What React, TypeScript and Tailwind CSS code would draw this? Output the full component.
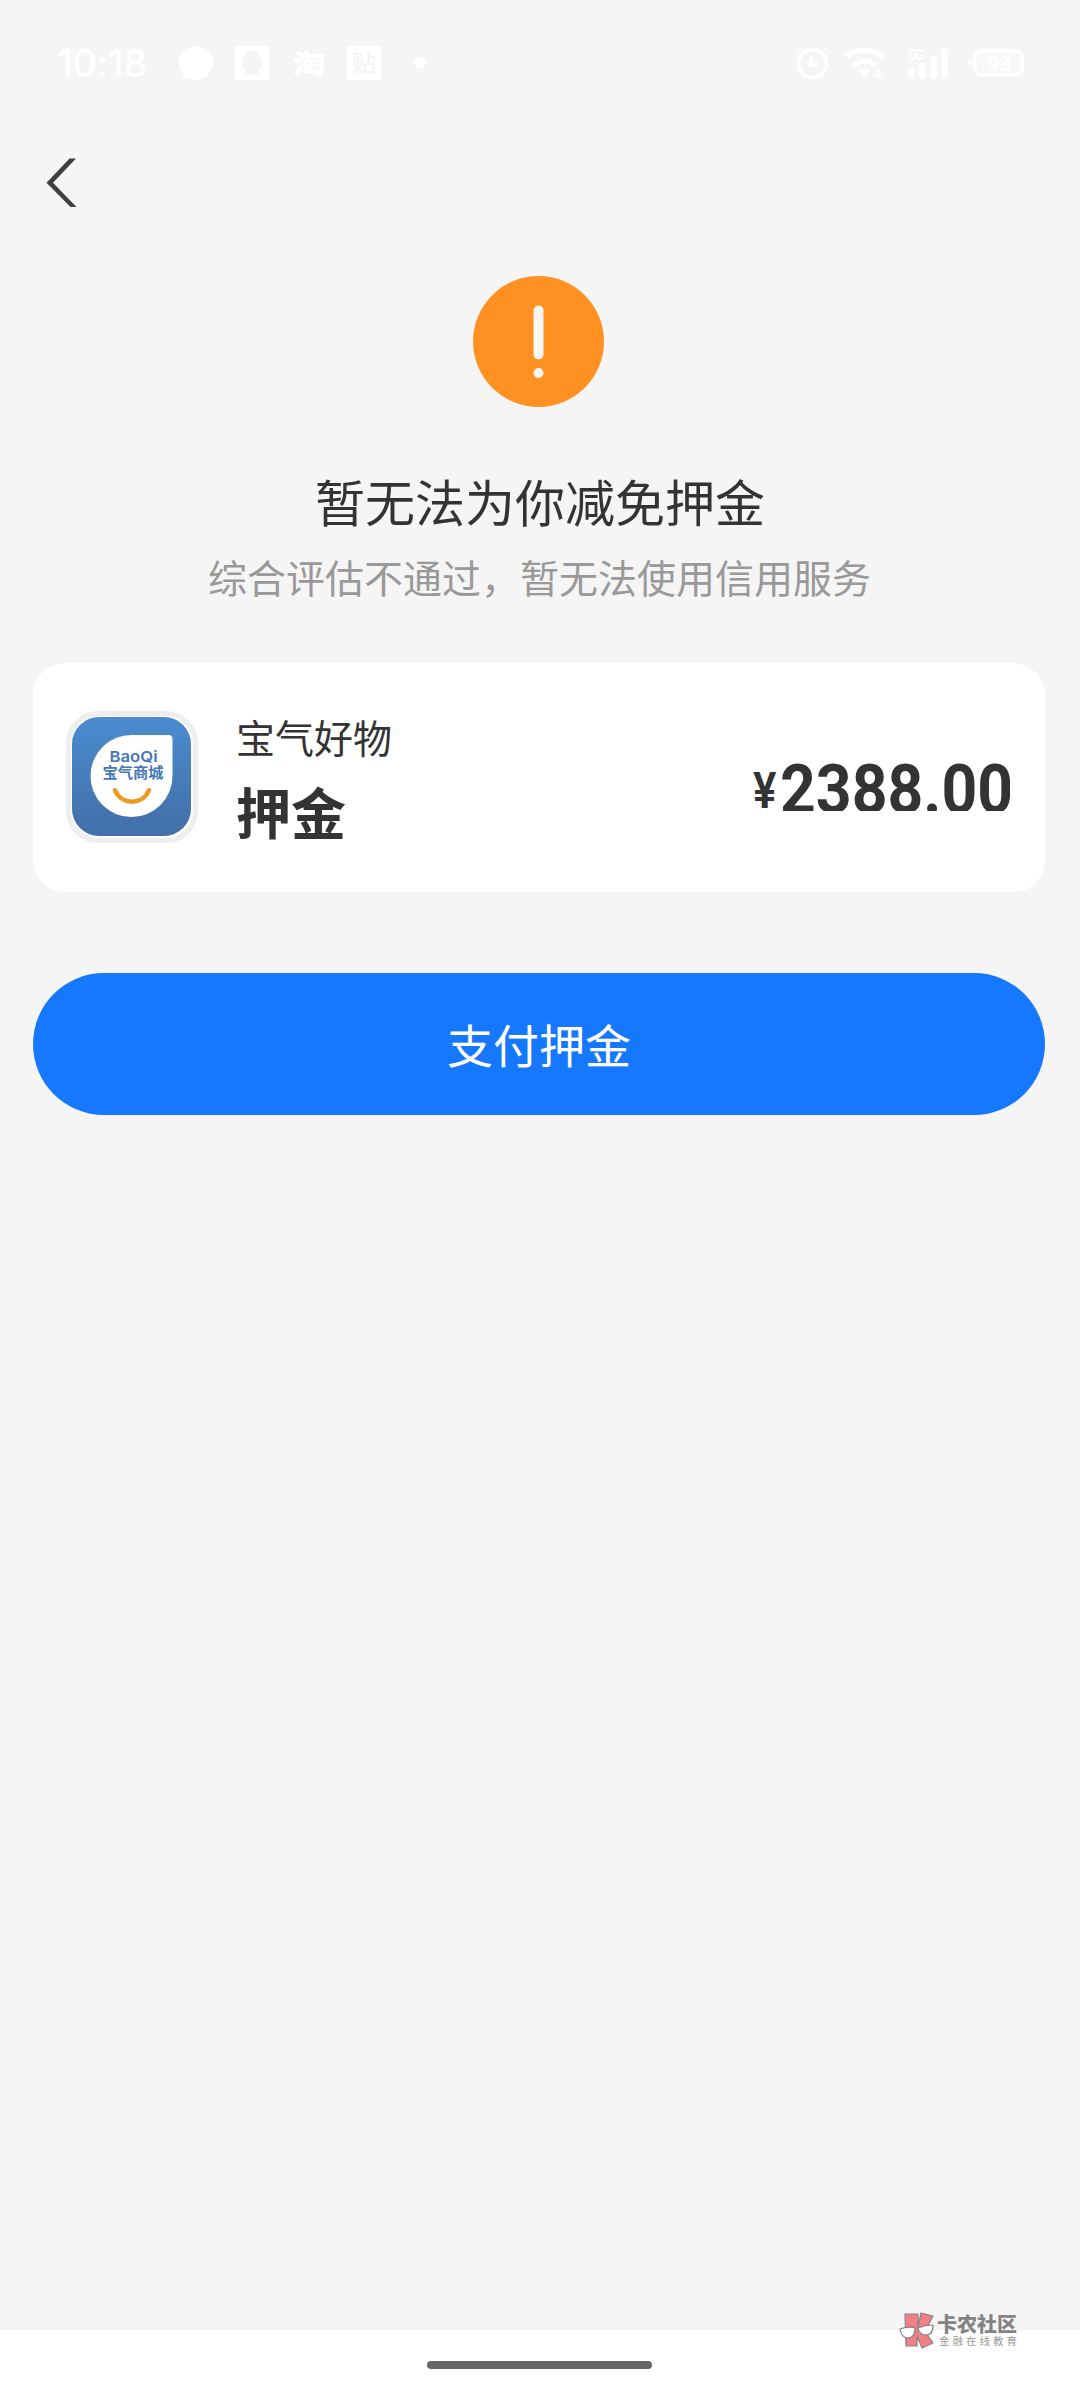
import React from 'react';

const AlarmIcon: React.FC = () => (
    <svg className="h-[36px] w-[36px]" viewBox="0 0 36 36" fill="none" stroke="white" strokeLinecap="round">
        <circle cx="18.500" cy="18.500" r="14" strokeWidth="4" />
        <path d="M17 13v6.500h5.500" strokeWidth="4" strokeLinejoin="round" />
        <path d="M3 6.500c0-3 1.500-4 4.500-4zM34 6.500c0-3-1.500-4-4.500-4z" fill="white" strokeWidth="1" />
    </svg>
);

const WifiIcon: React.FC = () => (
    <svg className="h-[36px] w-[40px]" viewBox="0 0 40 36" fill="none" stroke="white">
        <path d="M1.500 11Q19.500-3.500 37.500 11" strokeWidth="5" />
        <path d="M8.500 19.500Q19.500 10.500 30.500 19.500" strokeWidth="5" />
        <path d="M13.500 24.500Q19.500 20 25.500 24.500L19.500 31.500z" fill="white" stroke="none" />
        <path d="M35.500 23v5h4l-6 5.500-6-5.500h4v-5z" fill="white" fillOpacity="0.7" stroke="none" />
    </svg>
);

const SignalIcon: React.FC = () => (
    <svg className="h-[36px] w-[42px]" viewBox="0 0 42 36" fill="white">
        <text x="0.500" y="13" textLength="17" className="font-['Roboto',sans-serif] text-[15px] font-bold">5G</text>
        <rect x="1" y="21" width="6.500" height="10.500" rx="3.200" />
        <rect x="12" y="15" width="6.500" height="16.500" rx="3.200" />
        <rect x="23.500" y="8.500" width="6.500" height="23" rx="3.200" />
        <rect x="34.500" y="1.500" width="6.500" height="30" rx="3.200" />
    </svg>
);

const BatteryIcon: React.FC = () => (
    <svg className="h-[36px] w-[58px]" viewBox="0 0 58 36">
        <path d="M3.500 12.500v7.500c-4-1-4-6.500 0-7.500z" fill="white" />
        <rect x="6.700" y="4" width="47.500" height="24" rx="7" fill="white" fillOpacity="0.35" stroke="white" strokeWidth="3.500" />
        <text x="31" y="23.500" textAnchor="middle" fill="white" className="font-['Roboto',sans-serif] text-[21px] font-medium">93</text>
    </svg>
);

const StatusBar: React.FC = () => (
    <div className="flex h-[126px] items-center justify-between pl-[57px] pr-[54px] text-white">
        <div className="flex items-center">
            <span className="w-[88px] whitespace-nowrap font-['Inter',sans-serif] text-[38px] font-medium leading-none tracking-[-0.3px]">10:18</span>
            <svg className="ml-[33px] h-[36px] w-[36px]" viewBox="0 0 36 36" fill="white">
                <circle cx="18" cy="18" r="17" />
                <path d="M4.500 26l-1.500 7.500 9-1z" />
            </svg>
            <svg className="ml-[21px] h-[34px] w-[34px]" viewBox="0 0 34 34">
                <rect width="34" height="34" rx="2" fill="white" />
                <path d="M17 5c-5 0-8 3.500-8 8-1.500 3-3 7-3 10 1.500.5 2-1 3-2 .5 2 1 3 1.500 4-1.500.5-2 2-1 3.200 2.500.8 5 .5 7.500-.5 2.500 1 5 1.300 7.500.5 1-1.200.5-2.700-1-3.200.5-1 1-2 1.500-4 1 1 1.500 2.500 3 2 0-3-1.500-7-3-10 0-4.500-3-8-8-8z" fill="#f5f5f5" />
            </svg>
            <span className="ml-[22px] flex h-[34px] w-[36px] items-center justify-center text-[33px] font-black leading-none">
                <span className="mt-[-2px] scale-y-[0.82]">淘</span>
            </span>
            <span className="ml-[20px] flex h-[34px] w-[34px] items-center justify-center rounded-[2px] bg-white text-[24px] leading-none text-[#f2f2f2]">
                <span className="mt-[-2px]">贴</span>
            </span>
            <span className="ml-[33px] h-[12px] w-[12px] rounded-full bg-white" />
        </div>
        <div className="flex items-center">
            <AlarmIcon />
            <span className="ml-[15px] mt-[2px] flex"><WifiIcon /></span>
            <span className="ml-[22px] mt-[3px] flex"><SignalIcon /></span>
            <span className="ml-[19px] mt-[4px] flex"><BatteryIcon /></span>
        </div>
    </div>
);

const ShopLogo: React.FC = () => (
    <div className="mt-[-2px] h-[132px] w-[132px] rounded-[32px] border-[5px] border-[#eeeeee] bg-white p-px">
        <svg className="h-[119px] w-[119px]" viewBox="0 0 119 119">
            <defs>
                <linearGradient id="logoBlue" x1="0" y1="0" x2="0" y2="1">
                    <stop offset="0" stopColor="#4a8ccf" />
                    <stop offset="1" stopColor="#426fa8" />
                </linearGradient>
            </defs>
            <rect width="119" height="119" rx="27" fill="url(#logoBlue)" />
            <path d="M59.500 18H96.500Q100.500 18 100.500 22V59A41 41 0 1 1 59.500 18z" fill="white" />
            <text x="37.500" y="45" textLength="48" lengthAdjust="spacingAndGlyphs" fill="#4577b8" className="font-['Inter',sans-serif] text-[15px] font-semibold">BaoQi</text>
            <text x="30.500" y="61" textLength="61" lengthAdjust="spacingAndGlyphs" fill="#4577b8" className="text-[15px] font-bold">宝气商城</text>
            <path d="M43 73C49 88.500 71 88.500 77 73" fill="none" stroke="#ec9a22" strokeWidth="4.500" strokeLinecap="round" />
        </svg>
    </div>
);

const DepositCard: React.FC = () => (
    <div className="flex h-[229px] items-center rounded-[32px] bg-white pl-[33px] pr-[35px]">
        <ShopLogo />
        <div className="ml-[38px] flex-1">
            <p className="mt-[2px] text-[39px] leading-[58px]">宝气好物</p>
            <p className="mt-[5px] text-[55px] font-bold leading-[80px]">押金</p>
        </div>
        {/* the amount's line box is shorter than its digits, so the feet are cut off */}
        <div className="mt-[17px] flex h-[50px] w-[258px] overflow-hidden font-['Roboto',sans-serif]">
            <span className="ml-px mt-[5px] w-[27px] origin-left scale-x-[0.88] text-[50px] font-semibold leading-[50px]">¥</span>
            <span className="mt-[-6px] origin-left scale-x-[0.905] text-[69px] font-bold leading-[69px]">2388.00</span>
        </div>
    </div>
);

const Watermark: React.FC = () => (
    <div className="absolute bottom-[50px] right-[61px] flex items-center">
        <svg className="h-[38px] w-[36px]" viewBox="0 0 36 38" stroke="#858585" strokeWidth="1.200" strokeLinejoin="round">
            <path d="M6 2h13v13l3-14 12 3-8 15 8 12-11 5-5-12v10H7z" fill="#f07f86" />
            <path d="M1 17q8-3 15-1c0 7-2 10-7 10s-7-3-8-9z" fill="white" />
            <path d="M19 16q7-3 15-3c0 7-2 10-7 10s-7-2-8-7z" fill="white" />
        </svg>
        <div className="ml-[2px] w-[82px]">
            <p className="whitespace-nowrap text-[20px] font-black leading-[20px] text-[#848484]">卡农社区</p>
            <p className="whitespace-nowrap pl-[2px] text-[10.5px] leading-[14px] tracking-[3px] text-[#9c9c9c]">金融在线教育</p>
        </div>
    </div>
);

const App: React.FC = () => {
    return (
        <div className="relative flex h-[2400px] w-[1080px] flex-col bg-[#f5f5f5] font-['Noto_Sans_CJK_SC',sans-serif] text-[#333333]">
            <StatusBar />
            <header className="h-[150px] pl-[46px] pt-[32px]">
                <svg className="h-[50px] w-[32px]" viewBox="0 0 32 50" fill="#404040">
                    <path d="M23.500 .5H30L7 24.800 30.500 49H24.500L.5 24.800z" />
                </svg>
            </header>
            <main className="flex flex-1 flex-col pl-[33px] pr-[35px]">
                <svg className="mr-[2px] h-[131px] w-[131px] self-center" viewBox="0 0 131 131">
                    <circle cx="65.500" cy="65.500" r="65.500" fill="#ff9022" />
                    <rect x="60.500" y="29.500" width="10" height="54" rx="5" fill="#f8f6f3" />
                    <circle cx="65.500" cy="97" r="5" fill="#f8f6f3" />
                </svg>
                <h1 className="mt-[56px] pl-[2px] text-center text-[50px] leading-[74px]">暂无法为你减免押金</h1>
                <p className="mt-[10px] pl-px text-center text-[39px] leading-[58px] text-[#999999]">综合评估不通过，暂无法使用信用服务</p>
                <div className="mt-[58px]">
                    <DepositCard />
                </div>
                <button className="mt-[81px] h-[142px] w-full rounded-full bg-[#1677ff] pb-[2px] text-[46px] text-white">支付押金</button>
            </main>
            <footer className="flex h-[70px] justify-center bg-white pr-[2px] pt-[31px]">
                <span className="h-[8px] w-[225px] rounded-full bg-[#666666]" />
            </footer>
            <Watermark />
        </div>
    );
};

export default App;
